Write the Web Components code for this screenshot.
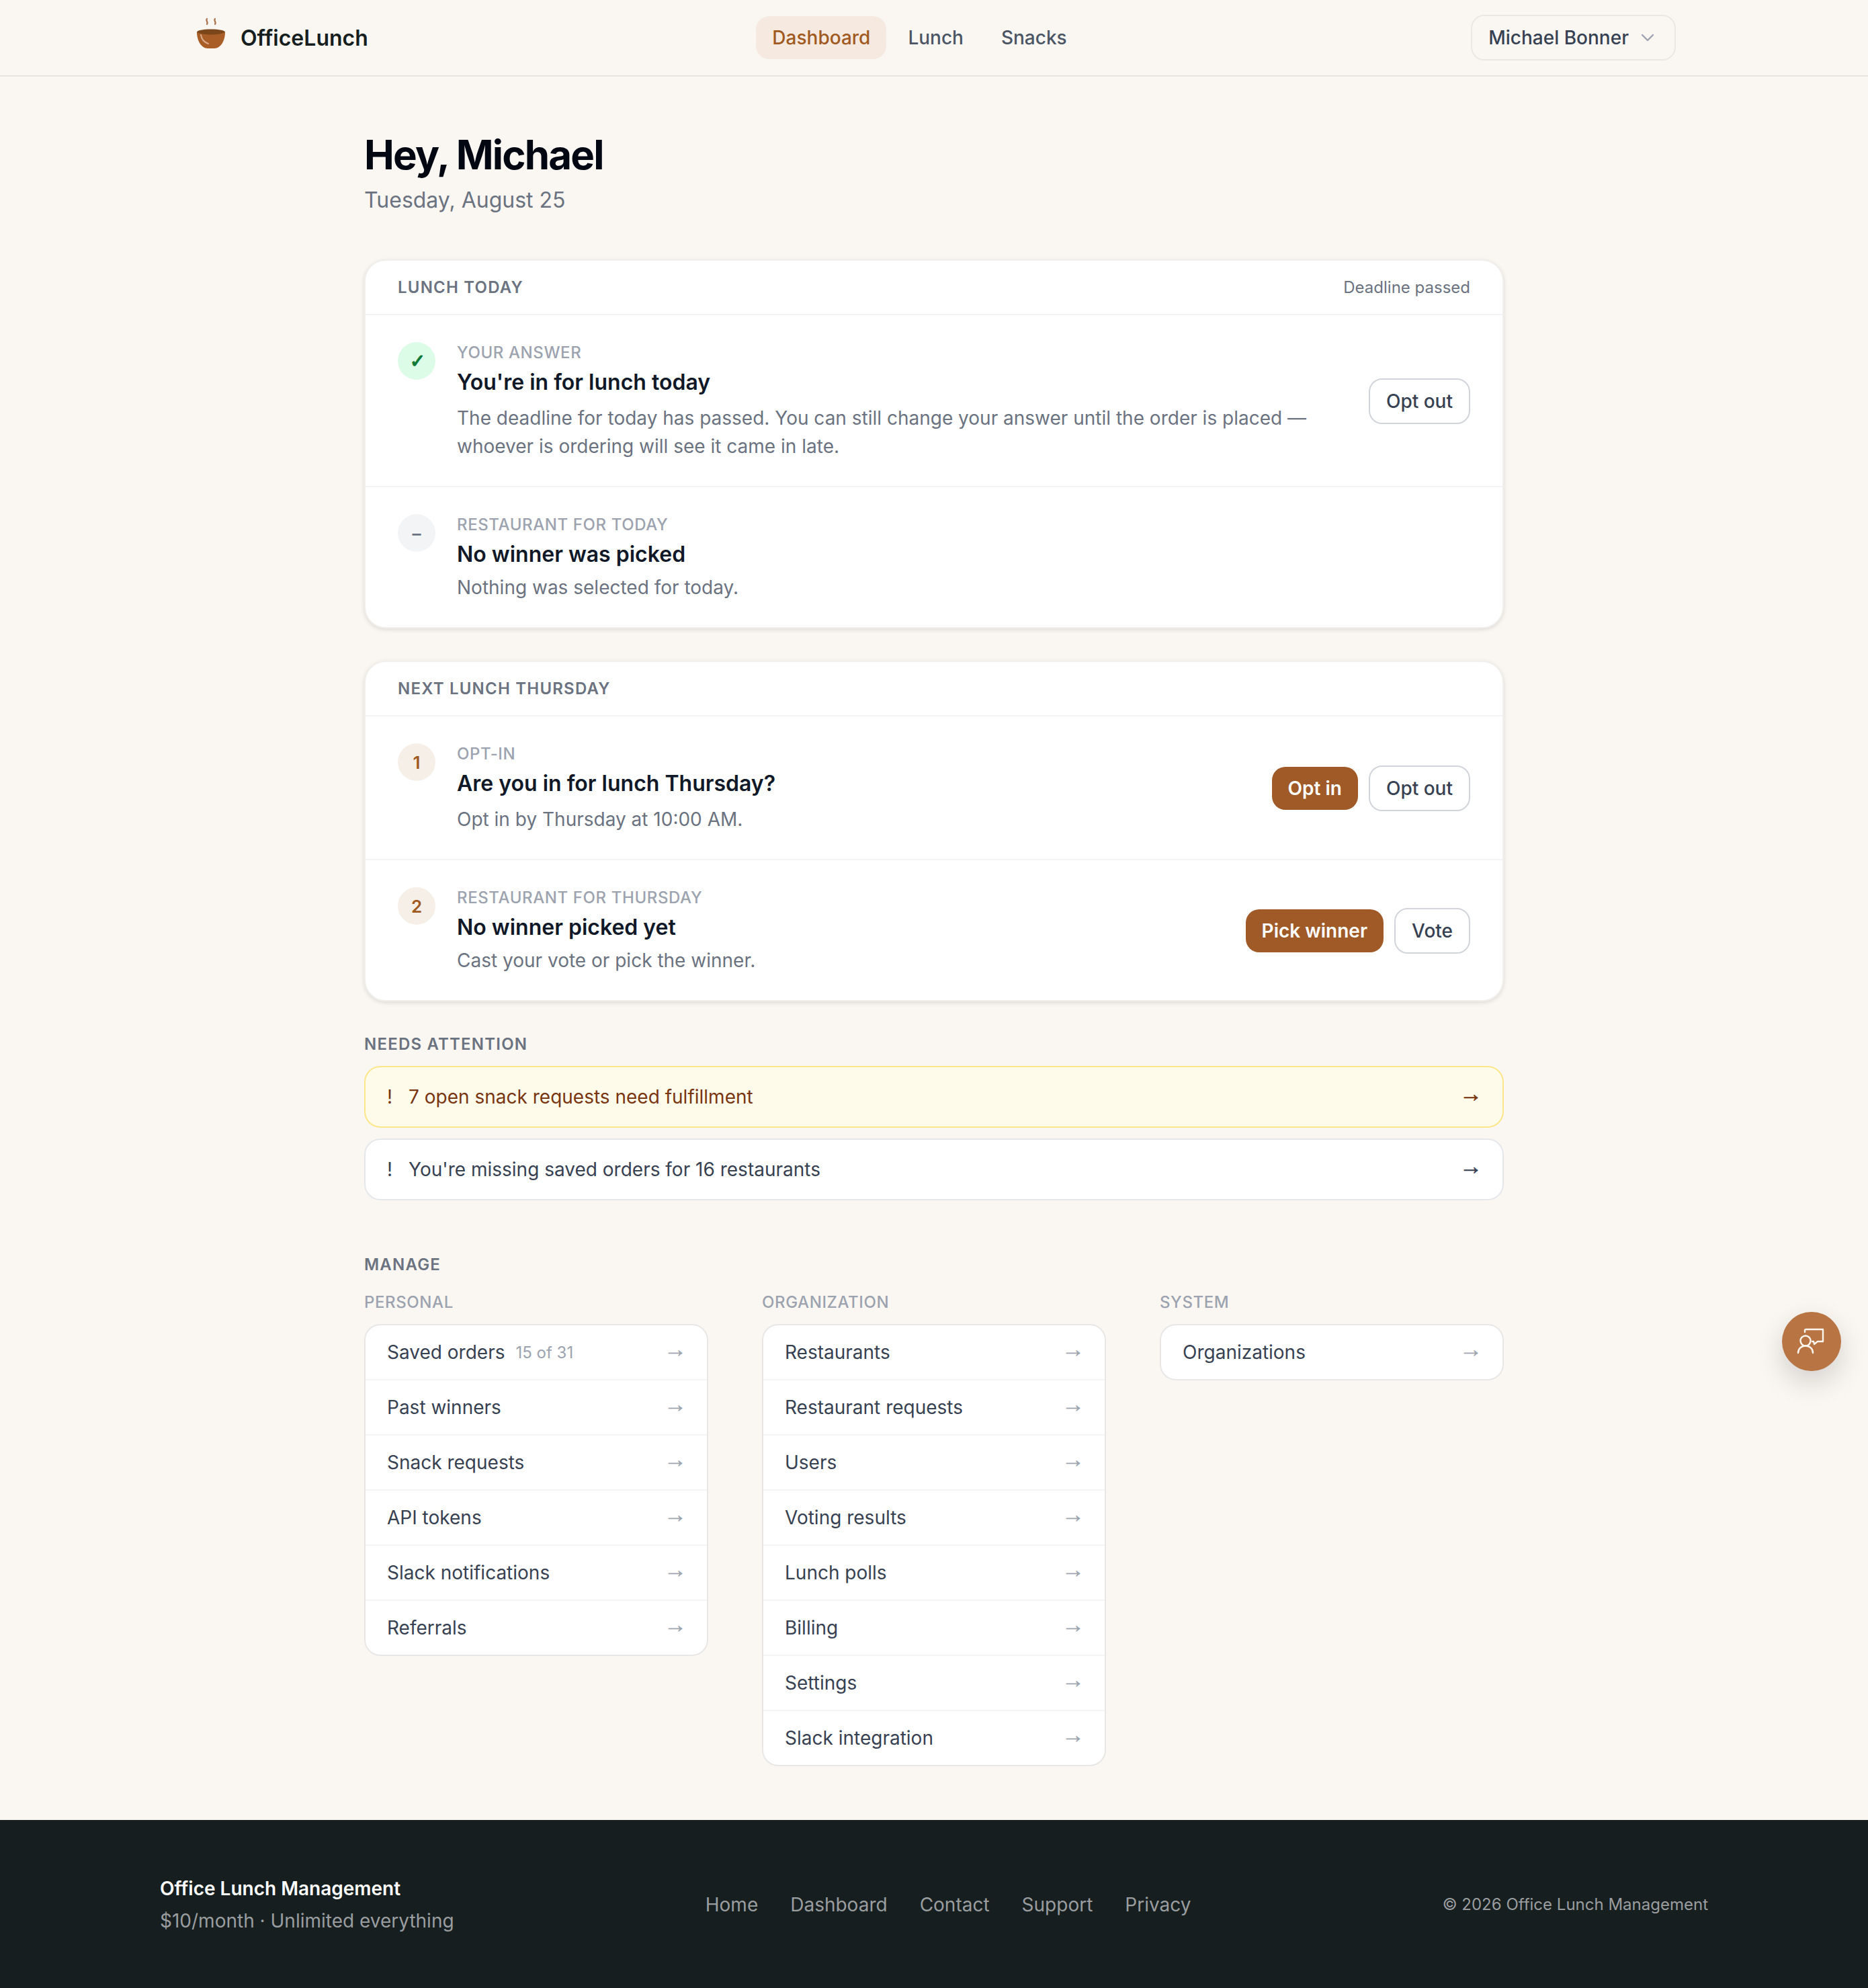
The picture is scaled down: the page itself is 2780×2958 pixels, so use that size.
<!doctype html>
<html lang="en">
<head>
<meta charset="utf-8">
<title>OfficeLunch</title>
<style>
  html, body { margin: 0; padding: 0; }
  body {
    min-height: 100vh;
    display: flex;
    flex-direction: column;
    background: #faf7f3;
    font-family: Inter, "Liberation Sans", sans-serif;
    color: #111827;
  }
  main {
    box-sizing: border-box;
    width: 1792px;
    margin: 0 auto;
    padding: 80px 48px 80px;
    flex: 1;
  }
  h1 {
    margin: 0;
    font-size: 60px;
    line-height: 72px;
    font-weight: 700;
    letter-spacing: -1.8px;
    color: #030712;
  }
  .date {
    margin-top: 8px;
    font-size: 32px;
    line-height: 48px;
    color: #6b7280;
  }
  .cards { display: flex; flex-direction: column; gap: 48px; margin-top: 64px; }
  .label {
    font-size: 24px;
    line-height: 36px;
    font-weight: 600;
    letter-spacing: 1.2px;
    color: #6b7280;
  }
  .attention { margin-top: 46px; }
  .attention .items { display: flex; flex-direction: column; gap: 16px; margin-top: 14px; }
  .manage { margin-top: 78px; }
  .manage .cols { display: grid; grid-template-columns: repeat(3, 1fr); gap: 80px; margin-top: 20px; align-items: start; }
</style>
</head>
<body>
<template id="site-header-tpl">
  <style>
    :host { display: block; border-bottom: 2px solid #e8e5e0; }
    .bar {
      box-sizing: border-box;
      width: 2304px;
      height: 112px;
      margin: 0 auto;
      padding: 0 48px;
      display: flex;
      align-items: center;
      justify-content: space-between;
    }
    .brand { display: flex; align-items: center; gap: 16px; font-size: 32px; font-weight: 600; color: #161e20; }
    svg { display: block; }
    nav { display: flex; gap: 8px; font-size: 28px; font-weight: 500; color: #4b5563; }
    nav a { padding: 0 24px; height: 64px; line-height: 64px; border-radius: 20px; }
    nav a.on { background: #f5e9e0; color: #a0591f; }
    .user {
      box-sizing: border-box;
      height: 68px;
      padding: 0 28px 0 24px;
      display: flex;
      align-items: center;
      gap: 16px;
      border: 2px solid #ebe8e4;
      border-radius: 20px;
      font-size: 28px;
      font-weight: 500;
      color: #374151;
    }
  </style>
  <div class="bar">
    <div class="brand">
      <svg width="56" height="64" viewBox="0 0 56 64">
        <path d="M22 3c-2.500 2.500 2.500 5 0 8M34 3c-2.500 2.500 2.500 5 0 8" transform="translate(0 1)" fill="none" stroke="#a9734c" stroke-width="2.200" stroke-linecap="round"/>
        <path d="M7 24c0 13 7 24 16 24h10c9 0 16-11 16-24z" fill="#a85e26"/>
        <path d="M7 24c0-3 9-4.500 21-4.500s21 1.500 21 4.500c-5 2.500-13 3.500-21 3.500s-16-1-21-3.500z" fill="#7c461b"/>
        <path d="M13 28c1 6 5 11 11 13" fill="none" stroke="#d8ab8e" stroke-width="2" stroke-linecap="round"/>
      </svg>
      <span>OfficeLunch</span>
    </div>
    <nav><a class="on">Dashboard</a><a>Lunch</a><a>Snacks</a></nav>
    <div class="user">
      <span>Michael Bonner</span>
      <svg width="24" height="24" viewBox="0 0 24 24"><path d="M4 8l8 8 8-8" fill="none" stroke="#9ca3af" stroke-width="2.400" stroke-linecap="round" stroke-linejoin="round"/></svg>
    </div>
  </div>
</template>

<template id="lunch-card-tpl">
  <style>
    :host {
      display: block;
      background: #fff;
      border: 2px solid #f1efec;
      border-radius: 32px;
      box-shadow: 0 2px 6px rgba(0, 0, 0, .12);
      overflow: hidden;
    }
    header {
      display: flex;
      justify-content: space-between;
      align-items: center;
      height: 79px;
      padding: 0 48px;
      border-bottom: 2px solid #f3f4f6;
    }
    .title { font-size: 24px; font-weight: 600; letter-spacing: 1.2px; color: #6b7280; text-transform: uppercase; }
    .meta { font-size: 24px; color: #6b7280; }
  </style>
  <header><span class="title"></span><span class="meta"></span></header>
  <slot></slot>
</template>

<template id="lunch-row-tpl">
  <style>
    :host { display: flex; align-items: center; gap: 32px; padding: 40px 48px 38px; }
    :host(:not(:last-child)) { border-bottom: 2px solid #f3f4f6; }
    :host(:last-child) .head { margin-bottom: 4px; }
    .badge {
      flex: none;
      align-self: flex-start;
      width: 56px;
      height: 56px;
      border-radius: 50%;
      display: flex;
      align-items: center;
      justify-content: center;
      font-size: 26px;
      font-weight: 600;
      background: #f3f4f6;
      color: #6b7280;
    }
    :host([tone=ok]) .badge {
      background: #dcfce7;
      color: #0f7a38;
      font-family: "DejaVu Sans", sans-serif;
      font-size: 28px;
      text-indent: 3px;
      -webkit-text-stroke: 1.2px #0f7a38;
    }
    :host([tone=step]) .badge { background: #f5efe8; color: #a0591f; }
    .body { flex: 1; min-width: 0; }
    .eyebrow { font-size: 24px; line-height: 32px; margin-bottom: 4px; font-weight: 500; letter-spacing: .6px; color: #9ca3af; text-transform: uppercase; }
    .head { font-size: 32px; line-height: 48px; margin-bottom: 8px; font-weight: 600; color: #111827; }
    .text { font-size: 28px; line-height: 42px; color: #6b7280; }
    .acts { display: flex; gap: 16px; align-items: center; }
  </style>
  <div class="badge"></div>
  <div class="body">
    <div class="eyebrow"></div>
    <div class="head"></div>
    <div class="text"><slot></slot></div>
  </div>
  <div class="acts"><slot name="actions"></slot></div>
</template>

<template id="lunch-button-tpl">
  <style>
    :host {
      display: inline-block;
      box-sizing: border-box;
      height: 68px;
      line-height: 64px;
      padding: 0 24px;
      border: 2px solid #d1d5db;
      border-radius: 20px;
      font-size: 28px;
      font-weight: 500;
      color: #374151;
      background: #fff;
    }
    :host([primary]) {
      height: 64px;
      line-height: 64px;
      border: 0;
      font-weight: 600;
      color: #fff;
      background: #a05a27;
    }
  </style>
  <slot></slot>
</template>

<template id="attention-item-tpl">
  <style>
    :host {
      box-sizing: border-box;
      display: flex;
      align-items: center;
      height: 92px;
      padding: 0 32px;
      gap: 24px;
      background: #fff;
      border: 2px solid #e5e7eb;
      border-radius: 24px;
      font-size: 28px;
      color: #374151;
    }
    :host([warn]) { background: #fffbeb; border-color: #fde68a; color: #78350f; }
    .msg { flex: 1; }
    .arrow {
      font-family: "Liberation Sans", sans-serif;
      font-size: 34px;
      line-height: 1;
      margin-right: -2px;
      -webkit-text-stroke: .6px currentColor;
      transform: translateY(-5px);
    }
  </style>
  <span>!</span>
  <span class="msg"><slot></slot></span>
  <span class="arrow">→</span>
</template>

<template id="manage-list-tpl">
  <style>
    :host { display: block; }
    .name { font-size: 24px; line-height: 36px; font-weight: 500; letter-spacing: .6px; color: #9ca3af; text-transform: uppercase; margin-bottom: 14px; }
    .box { background: #fff; border: 2px solid #e8e7e6; border-radius: 24px; overflow: hidden; }
  </style>
  <div class="name"></div>
  <div class="box"><slot></slot></div>
</template>

<template id="manage-link-tpl">
  <style>
    :host {
      display: flex;
      align-items: center;
      height: 80px;
      padding: 0 32px;
      gap: 16px;
      font-size: 28px;
      color: #374151;
    }
    :host(:not(:last-child)) { border-bottom: 2px solid #f3f4f6; }
    .extra { font-size: 24px; color: #9ca3af; }
    .grow { flex: 1; }
    .arrow {
      color: #9ca3af;
      font-family: "Liberation Sans", sans-serif;
      font-size: 34px;
      line-height: 1;
      margin-right: -2px;
      -webkit-text-stroke: .4px currentColor;
      transform: translateY(-5px);
    }
  </style>
  <span><slot></slot></span>
  <span class="extra"></span>
  <span class="grow"></span>
  <span class="arrow">→</span>
</template>

<template id="site-footer-tpl">
  <style>
    :host { display: block; background: #161e20; }
    .bar {
      box-sizing: border-box;
      width: 2304px;
      height: 251px;
      margin: 0 auto;
      display: flex;
      align-items: center;
      justify-content: space-between;
      color: #9a9d9f;
    }
    .name { font-size: 28px; line-height: 44px; font-weight: 600; color: #fff; }
    .tag { font-size: 28px; line-height: 44px; margin-top: 4px; }
    nav { display: flex; gap: 48px; font-size: 28px; }
    .copy { font-size: 24px; }
  </style>
  <div class="bar">
    <div><div class="name">Office Lunch Management</div><div class="tag">$10/month · Unlimited everything</div></div>
    <nav><a>Home</a><a>Dashboard</a><a>Contact</a><a>Support</a><a>Privacy</a></nav>
    <div class="copy">© 2026 Office Lunch Management</div>
  </div>
</template>

<template id="help-fab-tpl">
  <style>
    :host {
      position: absolute;
      left: 2652px;
      top: 1952px;
      width: 88px;
      height: 88px;
      border-radius: 50%;
      background: #b87543;
      box-shadow: 0 16px 40px rgba(0, 0, 0, .16);
    }
    svg { display: block; }
  </style>
  <svg width="88" height="88" viewBox="0 0 88 88" fill="none" stroke="#fff6ef" stroke-width="2.400" stroke-linecap="round" stroke-linejoin="round">
    <circle cx="35" cy="43" r="7.500"/>
    <path d="M24 61c0-6.500 5-10.500 11-10.500s11 4 11 10.500"/>
    <path d="M34 30v-2.500c0-.8.700-1.500 1.500-1.500H61v18h-8l-5 4-1-4h-2"/>
  </svg>
</template>

<site-header></site-header>
<main>
  <h1>Hey, Michael</h1>
  <div class="date">Tuesday, August 25</div>
  <div class="cards">
    <lunch-card title="Lunch today" meta="Deadline passed">
      <lunch-row tone="ok" mark="✓" eyebrow="Your answer" head="You're in for lunch today">
        The deadline for today has passed. You can still change your answer until the order is placed — whoever is ordering will see it came in late.
        <lunch-button slot="actions">Opt out</lunch-button>
      </lunch-row>
      <lunch-row mark="–" eyebrow="Restaurant for today" head="No winner was picked">Nothing was selected for today.</lunch-row>
    </lunch-card>
    <lunch-card title="Next lunch Thursday">
      <lunch-row tone="step" mark="1" eyebrow="Opt-in" head="Are you in for lunch Thursday?">
        Opt in by Thursday at 10:00 AM.
        <lunch-button slot="actions" primary>Opt in</lunch-button>
        <lunch-button slot="actions">Opt out</lunch-button>
      </lunch-row>
      <lunch-row tone="step" mark="2" eyebrow="Restaurant for Thursday" head="No winner picked yet">
        Cast your vote or pick the winner.
        <lunch-button slot="actions" primary>Pick winner</lunch-button>
        <lunch-button slot="actions">Vote</lunch-button>
      </lunch-row>
    </lunch-card>
  </div>
  <section class="attention">
    <div class="label">NEEDS ATTENTION</div>
    <div class="items">
      <attention-item warn>7 open snack requests need fulfillment</attention-item>
      <attention-item>You're missing saved orders for 16 restaurants</attention-item>
    </div>
  </section>
  <section class="manage">
    <div class="label">MANAGE</div>
    <div class="cols">
      <manage-list name="Personal">
        <manage-link extra="15 of 31">Saved orders</manage-link>
        <manage-link>Past winners</manage-link>
        <manage-link>Snack requests</manage-link>
        <manage-link>API tokens</manage-link>
        <manage-link>Slack notifications</manage-link>
        <manage-link>Referrals</manage-link>
      </manage-list>
      <manage-list name="Organization">
        <manage-link>Restaurants</manage-link>
        <manage-link>Restaurant requests</manage-link>
        <manage-link>Users</manage-link>
        <manage-link>Voting results</manage-link>
        <manage-link>Lunch polls</manage-link>
        <manage-link>Billing</manage-link>
        <manage-link>Settings</manage-link>
        <manage-link>Slack integration</manage-link>
      </manage-list>
      <manage-list name="System">
        <manage-link>Organizations</manage-link>
      </manage-list>
    </div>
  </section>
</main>
<site-footer></site-footer>
<help-fab></help-fab>

<script>
  class Base extends HTMLElement {
    constructor() {
      super();
      const tpl = document.getElementById(this.localName + '-tpl');
      this.attachShadow({ mode: 'open' }).appendChild(tpl.content.cloneNode(true));
    }
    fill(selector, value) {
      this.shadowRoot.querySelector(selector).textContent = value || '';
    }
  }

  class SiteHeader extends Base {}
  class SiteFooter extends Base {}
  class HelpFab extends Base {}
  class LunchButton extends Base {}
  class AttentionItem extends Base {}

  class LunchCard extends Base {
    connectedCallback() {
      this.fill('.title', this.getAttribute('title'));
      this.fill('.meta', this.getAttribute('meta'));
      this.removeAttribute('title');
    }
  }

  class LunchRow extends Base {
    connectedCallback() {
      this.fill('.badge', this.getAttribute('mark'));
      this.fill('.eyebrow', this.getAttribute('eyebrow'));
      this.fill('.head', this.getAttribute('head'));
    }
  }

  class ManageList extends Base {
    connectedCallback() {
      this.fill('.name', this.getAttribute('name'));
    }
  }

  class ManageLink extends Base {
    connectedCallback() {
      this.fill('.extra', this.getAttribute('extra'));
    }
  }

  customElements.define('site-header', SiteHeader);
  customElements.define('site-footer', SiteFooter);
  customElements.define('help-fab', HelpFab);
  customElements.define('lunch-button', LunchButton);
  customElements.define('attention-item', AttentionItem);
  customElements.define('lunch-card', LunchCard);
  customElements.define('lunch-row', LunchRow);
  customElements.define('manage-list', ManageList);
  customElements.define('manage-link', ManageLink);
</script>
</body>
</html>
